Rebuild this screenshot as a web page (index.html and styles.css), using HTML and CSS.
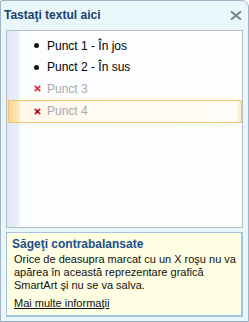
FILE: index.html
```html
<!DOCTYPE html>
<html lang="ro">
<head>
<meta charset="utf-8">
<link rel="stylesheet" href="styles.css">
</head>
<body>
<div class="window">
  <div class="titlebar">
    <span class="title">Tastaţi textul aici</span>
    <svg class="close" width="12" height="9" viewBox="0 0 12 9"><path d="M1 0.5 L11 8.5 M11 0.5 L1 8.5" stroke="#7f8a96" stroke-width="2.2"/></svg>
  </div>
  <div class="list">
    <div class="row"><span class="dot"></span><span class="txt">Punct 1 - În jos</span></div>
    <div class="row"><span class="dot"></span><span class="txt">Punct 2 - În sus</span></div>
    <div class="row off"><svg class="x" width="7" height="7" viewBox="0 0 7 7"><path d="M0.8 0.8 L6.2 6.2 M6.2 0.8 L0.8 6.2" stroke="#e0303a" stroke-width="1.8"/></svg><span class="txt">Punct 3</span></div>
    <div class="row off sel"><svg class="x" width="7" height="7" viewBox="0 0 7 7"><path d="M0.8 0.8 L6.2 6.2 M6.2 0.8 L0.8 6.2" stroke="#d0202a" stroke-width="1.8"/><rect x="2.5" y="2.5" width="2" height="2" fill="#3a0a0a"/></svg><span class="txt">Punct 4</span></div>
  </div>
  <div class="info">
    <div class="info-title">Săgeţi contrabalansate</div>
    <p class="info-text">Orice de deasupra marcat cu un X roşu nu va<br>apărea în această reprezentare grafică<br>SmartArt şi nu se va salva.</p>
    <a class="more" href="#">Mai multe informaţii</a>
  </div>
</div>
</body>
</html>
```
FILE: styles.css
```css
html, body { margin: 0; padding: 0; }
body { width: 249px; height: 322px; overflow: hidden; font-family: "Liberation Sans", Arial, sans-serif; }
.window {
  box-sizing: border-box;
  width: 249px; height: 322px;
  border: 1px solid #9fb2c6;
  border-top-right-radius: 7px;
  border-top-left-radius: 2px;
  background: #e9f7fa;
  display: flex; flex-direction: column;
  padding: 0 5px 4px 5px;
}
.titlebar {
  flex: 0 0 29px;
  display: flex; align-items: center; justify-content: space-between;
  margin-left: -2px;
}
.title {
  font-weight: bold; font-size: 12px;
  color: #1a3f70;
  margin-top: -2px;
}
.close { margin-top: -1px; margin-right: 1px; }
.list {
  box-sizing: border-box;
  flex: 0 0 198px;
  border: 1px solid #b5bcc6;
  background: linear-gradient(to right, #dde7f5 0, #ecf1fa 12px, #fbfdfe 13px, #fdfffe 100%);
  padding-top: 4px;
}
.row {
  height: 21px;
  display: flex; align-items: center;
  padding-left: 27px;
  font-size: 12px;
  color: #000;
  box-sizing: border-box;
  margin-bottom: 0.5px;
}
.dot { width: 5px; height: 5px; border-radius: 50%; background: #111; margin-right: 8px; }
.x { margin-right: 6px; }
.txt { line-height: 14px; }
.off .txt { color: #a7a9ae; }
.sel {
  height: 23px;
  margin-left: 1px;
  border: 1px solid #f6c46f;
  padding-left: 25px;
  background: linear-gradient(to right, #fbd88d 0, #fde8bc 10px, #fff9ec 11px, #fffdf8 calc(100% - 5px), #fde7b4 100%);
}
.info {
  flex: 1 1 auto;
  margin-top: 4px;
  box-sizing: border-box;
  border: 1px solid #a7c3de;
  border-right: 2px solid #a2c2e2;
  border-bottom: 2px solid #a2c2e2;
  background: #fefee2;
  padding: 4px 2px 0 5px;
}
.info-title {
  font-weight: bold; font-size: 12px; color: #1d4f8e;
  line-height: 14px;
}
.info-text {
  margin: 2px 0 0 2px;
  font-size: 11px; line-height: 13px; color: #111;
  white-space: nowrap;
}
.more {
  display: inline-block;
  margin: 4px 0 0 2px;
  font-size: 11px; line-height: 14px; color: #111;
  text-decoration: underline;
}
```
